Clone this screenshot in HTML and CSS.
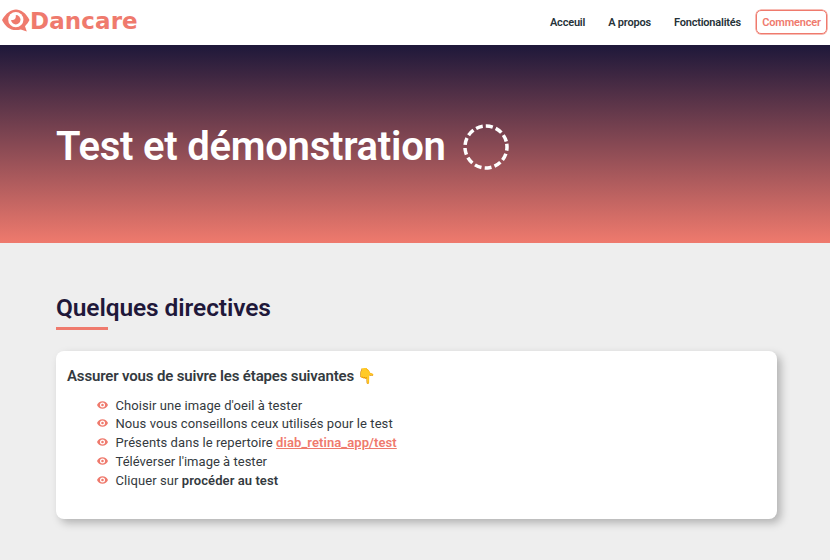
FILE: index.html
```html
<!DOCTYPE html>
<html lang="fr">
<head>
<meta charset="utf-8">
<title>Dancare</title>
<link rel="stylesheet" href="styles.css">
</head>
<body>
<svg class="defs" width="0" height="0" aria-hidden="true">
  <symbol id="eye" viewBox="0 0 24 16">
    <path fill="currentColor" fill-rule="evenodd" d="M12 0C6.500 0 2 3 0 8c2 5 6.500 8 12 8s10-3 12-8C22 3 17.500 0 12 0zm0 13.500a5.500 5.500 0 1 1 0-11 5.500 5.500 0 0 1 0 11z"/>
    <circle cx="12" cy="8" r="2.800" fill="currentColor"/>
  </symbol>
</svg>
<header class="navbar">
  <a class="brand">
    <svg class="logo" viewBox="0 0 28 23">
      <path fill="#ef7a6d" d="M0 11C4 4 9 .5 14 .5S24 4 27.500 11c-1.300 2.500-2.800 4.500-4.500 6.200l1.800 5.300-6-2C9.500 22.500 4 19 0 11z"/>
      <circle cx="13.800" cy="10.700" r="7.600" fill="#fff"/>
      <circle cx="13.800" cy="10.700" r="4.700" fill="#ef7a6d"/>
      <path fill="#fff" d="M8.300 5.500h5.500v2.200c0 2-1.200 3.200-3.200 3.200H8.300z"/>
    </svg>
    <span class="brand-name">Dancare</span>
  </a>
  <nav class="links">
    <a class="link">Acceuil</a>
    <a class="link">A propos</a>
    <a class="link features">Fonctionalités</a>
    <a class="start">Commencer</a>
  </nav>
</header>
<section class="hero">
  <h1>Test et démonstration</h1>
  <svg class="ring" viewBox="0 0 46 46"><circle cx="23" cy="23" r="21" fill="none" stroke="#fff" stroke-width="3.500" stroke-dasharray="7 3.150" transform="rotate(-9 23 23)"/></svg>
</section>
<main>
  <h2>Quelques directives</h2>
  <div class="rule"></div>
  <article class="card">
    <h3>Assurer vous de suivre les étapes suivantes <span class="hand">👇</span></h3>
    <ul>
      <li><svg><use href="#eye"/></svg><span>Choisir une image d'oeil à tester</span></li>
      <li><svg><use href="#eye"/></svg><span>Nous vous conseillons ceux utilisés pour le test</span></li>
      <li><svg><use href="#eye"/></svg><span>Présents dans le repertoire <a>diab_retina_app/test</a></span></li>
      <li><svg><use href="#eye"/></svg><span class="upload">Téléverser l'image à tester</span></li>
      <li><svg><use href="#eye"/></svg><span>Cliquer sur <b>procéder au test</b></span></li>
    </ul>
  </article>
</main>
</body>
</html>
```
FILE: styles.css
```css
* { box-sizing: border-box; }
body { margin: 0; background: #eee; color: #343a40; font-family: Roboto, "Liberation Sans", sans-serif; height: 560px; overflow: hidden; }
.defs { display: block; }
.navbar { height: 45px; background: #fff; display: flex; justify-content: space-between; }
.brand { display: flex; padding: 9px 0 0 2px; }
.logo { width: 28px; height: 23px; }
.brand-name { font: bold 23px/24px "DejaVu Sans", sans-serif; letter-spacing: .1px; color: #ef7a6d; }
.links { display: flex; align-items: flex-start; padding: 10px 3px 0 0; font-size: 11px; font-weight: 600; letter-spacing: -.2px; color: #263238; line-height: 25px; }
.link { margin-right: 23px; white-space: nowrap; }
.features { margin-right: 15px; }
.start { width: 71px; height: 24px; border: 1px solid #ef7a6d; box-shadow: 0 0 0 .5px #ef7a6d; border-radius: 5px; color: #ef7a6d; text-align: center; line-height: 23px; }
.hero { height: 198px; padding: 5px 0 0 56px; display: flex; align-items: center; background: linear-gradient(#1f183a, #ef7a6d); border-top: 1px solid #1f183a; }
h1 { margin: 0; width: 407px; font-size: 40px; font-weight: 600; letter-spacing: -.25px; line-height: 50px; color: #fff; white-space: nowrap; }
.ring { width: 46px; height: 46px; }
main { padding: 49px 53px 0 56px; }
h2 { margin: 0; font-size: 24.5px; font-weight: 600; letter-spacing: -.1px; line-height: 31px; color: #1f183a; }
.rule { width: 52px; height: 3px; margin-top: 4px; background: #ef7a6d; }
.card { margin-top: 21px; height: 168px; padding: 14px 11px; background: #fff; border-radius: 8px; box-shadow: 4px 4px 8px rgba(0,0,0,.25); }
h3 { margin: 0; font-size: 15px; font-weight: 600; letter-spacing: -.16px; line-height: 22px; white-space: nowrap; }
.hand { margin-left: -1px; }
ul { list-style: none; margin: 9.500px 0 0; padding: 0 0 0 30px; font-size: 13px; letter-spacing: .08px; line-height: 18.75px; }
li { display: flex; white-space: nowrap; }
li svg { width: 11px; height: 8px; margin: 4px 7.500px 0 0; color: #ef7a6d; }
li a { color: #ef7a6d; font-weight: 600; text-decoration: underline; }
.upload { letter-spacing: .02px; }
b { font-weight: 600; }
```
